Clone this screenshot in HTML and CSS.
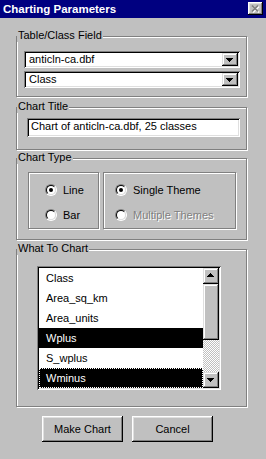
FILE: index.html
```html
<!DOCTYPE html>
<html lang="en">
<head>
    <meta charset="UTF-8">
    <meta name="viewport" content="width=device-width, initial-scale=1.0">
    <title>Charting Parameters</title>
    <link rel="stylesheet" href="styles.css">
</head>
<body>
    <div class="dialog">
        <header class="titlebar">
            <span class="title">Charting Parameters</span>
            <span class="close-btn">
                <svg width="15" height="13" viewBox="0 0 15 13">
                    <path d="M5 4.5 L11 10.5 M11 4.5 L5 10.5" stroke="#fff" stroke-width="1.7" fill="none"/>
                    <path d="M4 3.5 L10 9.5 M10 3.5 L4 9.5" stroke="#808080" stroke-width="1.7" fill="none"/>
                </svg>
            </span>
        </header>

        <div class="content">
            <section class="group group-table">
                <span class="caption">Table/Class Field</span>
                <div class="combo">
                    <span class="combo-text">anticln-ca.dbf</span>
                    <span class="combo-btn">
                        <svg width="16" height="13" viewBox="0 0 16 13" shape-rendering="crispEdges"><path d="M4 5h7v1h-1v1h-1v1h-1v1h-1v-1h-1v-1h-1v-1h-1z" fill="#000"/></svg>
                    </span>
                </div>
                <div class="combo">
                    <span class="combo-text">Class</span>
                    <span class="combo-btn">
                        <svg width="16" height="13" viewBox="0 0 16 13" shape-rendering="crispEdges"><path d="M4 5h7v1h-1v1h-1v1h-1v1h-1v-1h-1v-1h-1v-1h-1z" fill="#000"/></svg>
                    </span>
                </div>
            </section>

            <section class="group group-title">
                <span class="caption">Chart Title</span>
                <div class="textbox">Chart of anticln-ca.dbf, 25 classes</div>
            </section>

            <section class="group group-type">
                <span class="caption">Chart Type</span>
                <div class="subgroup sub-left">
                    <label class="radio-row">
                        <span class="radio checked"><span class="radio-in"></span></span>
                        <span>Line</span>
                    </label>
                    <label class="radio-row">
                        <span class="radio"><span class="radio-in"></span></span>
                        <span>Bar</span>
                    </label>
                </div>
                <div class="subgroup sub-right">
                    <label class="radio-row">
                        <span class="radio checked"><span class="radio-in"></span></span>
                        <span>Single Theme</span>
                    </label>
                    <label class="radio-row disabled">
                        <span class="radio"><span class="radio-in"></span></span>
                        <span>Multiple Themes</span>
                    </label>
                </div>
            </section>

            <section class="group group-list">
                <span class="caption">What To Chart</span>
                <div class="listbox">
                    <ul class="list-items">
                        <li class="list-item">Class</li>
                        <li class="list-item">Area_sq_km</li>
                        <li class="list-item">Area_units</li>
                        <li class="list-item selected">Wplus</li>
                        <li class="list-item">S_wplus</li>
                        <li class="list-item selected focused">Wminus</li>
                    </ul>
                    <div class="scrollbar">
                        <span class="sb-btn">
                            <svg width="16" height="16" viewBox="0 0 16 16" shape-rendering="crispEdges"><path d="M4 9h7v-1h-1v-1h-1v-1h-1v-1h-1v1h-1v1h-1v1h-1z" fill="#000"/></svg>
                        </span>
                        <span class="sb-thumb"></span>
                        <span class="sb-track"></span>
                        <span class="sb-btn">
                            <svg width="16" height="16" viewBox="0 0 16 16" shape-rendering="crispEdges"><path d="M4 6h7v1h-1v1h-1v1h-1v1h-1v-1h-1v-1h-1v-1h-1z" fill="#000"/></svg>
                        </span>
                    </div>
                </div>
            </section>

            <div class="buttons">
                <button class="btn">Make Chart</button>
                <button class="btn">Cancel</button>
            </div>
        </div>
    </div>
</body>
</html>
```

FILE: styles.css
```css
body {
    margin: 0;
    font-family: "Liberation Sans", Arial, sans-serif;
    font-size: 11px;
    color: #000;
    background-color: #c0c0c0;
}

.dialog {
    width: 266px;
    height: 459px;
    background-color: #c0c0c0;
    overflow: hidden;
}

/* title bar */
.titlebar {
    display: flex;
    justify-content: space-between;
    height: 18px;
    background-color: #000080;
    color: #fff;
}

.title {
    font-weight: bold;
    font-size: 11.5px;
    line-height: 18px;
    padding-left: 3px;
}

.close-btn {
    width: 15px;
    height: 13px;
    margin: 2px 3px 0 0;
    background-color: #c0c0c0;
    box-shadow: inset -1px -1px #000, inset 1px 1px #fff, inset -2px -2px #808080, inset 2px 2px #dfdfdf;
}

.close-btn svg,
.combo-btn svg,
.sb-btn svg {
    display: block;
}

.content {
    padding-left: 16px;
}

/* etched group boxes */
.group {
    position: relative;
    width: 231px;
    box-sizing: border-box;
    border: 1px solid #808080;
    box-shadow: inset 1px 1px #fff, 1px 1px #fff;
}

.caption {
    position: absolute;
    top: -8px;
    left: 0;
    padding: 0 1px;
    line-height: 13px;
    background-color: #c0c0c0;
}

.group-table {
    margin-top: 18px;
    padding: 14px 6px 8px 7px;
}

.group-title {
    margin-top: 10px;
    padding: 10px 6px 12px 10px;
}

.group-type {
    display: flex;
    gap: 4px;
    margin-top: 8px;
    padding: 13px 10px 10px 11px;
}

.group-list {
    margin-top: 9px;
    padding: 16px 0 16px 20px;
}

/* sunken fields */
.combo,
.textbox,
.listbox {
    box-sizing: border-box;
    background-color: #fff;
    box-shadow: inset 1px 1px #808080, inset -1px -1px #fff, inset 2px 2px #000, inset -2px -2px #dfdfdf;
}

.combo {
    display: flex;
    height: 17px;
    padding: 2px;
}

.combo + .combo {
    margin-top: 3px;
}

.combo-text {
    flex: 1;
    line-height: 13px;
    padding-left: 3px;
}

.combo-btn,
.sb-btn,
.sb-thumb {
    background-color: #c0c0c0;
    box-shadow: inset -1px -1px #000, inset 1px 1px #dfdfdf, inset -2px -2px #808080, inset 2px 2px #fff;
}

.combo-btn {
    width: 16px;
    height: 13px;
}

.textbox {
    height: 19px;
    padding: 3px 4px 0;
    line-height: 11px;
    white-space: nowrap;
    overflow: hidden;
}

/* radio groups */
.subgroup {
    display: flex;
    flex-direction: column;
    gap: 13px;
    height: 57px;
    box-sizing: border-box;
    border: 1px solid #808080;
    box-shadow: inset 1px 1px #fff, 1px 1px #fff;
}

.sub-left {
    width: 71px;
    padding: 11px 0 0 16px;
}

.sub-right {
    width: 133px;
    padding: 11px 0 0 11px;
}

.radio-row {
    display: flex;
    align-items: center;
    gap: 6px;
    height: 12px;
    line-height: 12px;
    white-space: nowrap;
}

.radio {
    width: 12px;
    height: 12px;
    box-sizing: border-box;
    border: 1px solid;
    border-color: #808080 #fff #fff #808080;
    border-radius: 50%;
}

.radio-in {
    display: flex;
    align-items: center;
    justify-content: center;
    width: 10px;
    height: 10px;
    box-sizing: border-box;
    border: 1px solid;
    border-color: #000 #dfdfdf #dfdfdf #000;
    border-radius: 50%;
    background-color: #fff;
}

.checked .radio-in::after {
    content: "";
    width: 4px;
    height: 4px;
    border-radius: 50%;
    background-color: #000;
}

.disabled span:last-child {
    color: #808080;
    text-shadow: 1px 1px #fff;
}

/* list box */
.listbox {
    display: flex;
    width: 184px;
    height: 124px;
    padding: 2px;
}

.list-items {
    flex: 1;
    margin: 0;
    padding: 0;
    list-style: none;
}

.list-item {
    height: 20px;
    line-height: 20px;
    padding-left: 7px;
}

.list-item.selected {
    background-color: #000;
    color: #fff;
}

.list-item.focused {
    outline: 1px dotted #fff;
    outline-offset: -1px;
}

.scrollbar {
    display: flex;
    flex-direction: column;
    width: 16px;
}

.sb-btn {
    height: 16px;
}

.sb-thumb {
    height: 56px;
}

.sb-track {
    flex: 1;
    background: repeating-conic-gradient(#fff 0 25%, #c0c0c0 0 50%) 0 0 / 2px 2px;
}

/* buttons */
.buttons {
    display: flex;
    gap: 9px;
    margin-top: 9px;
    padding-left: 26px;
}

.btn {
    width: 81px;
    height: 26px;
    padding: 0;
    border: none;
    font-family: inherit;
    font-size: 11px;
    color: #000;
    background-color: #c0c0c0;
    box-shadow: inset -1px -1px #000, inset 1px 1px #fff, inset -2px -2px #808080, inset 2px 2px #dfdfdf;
}
```
